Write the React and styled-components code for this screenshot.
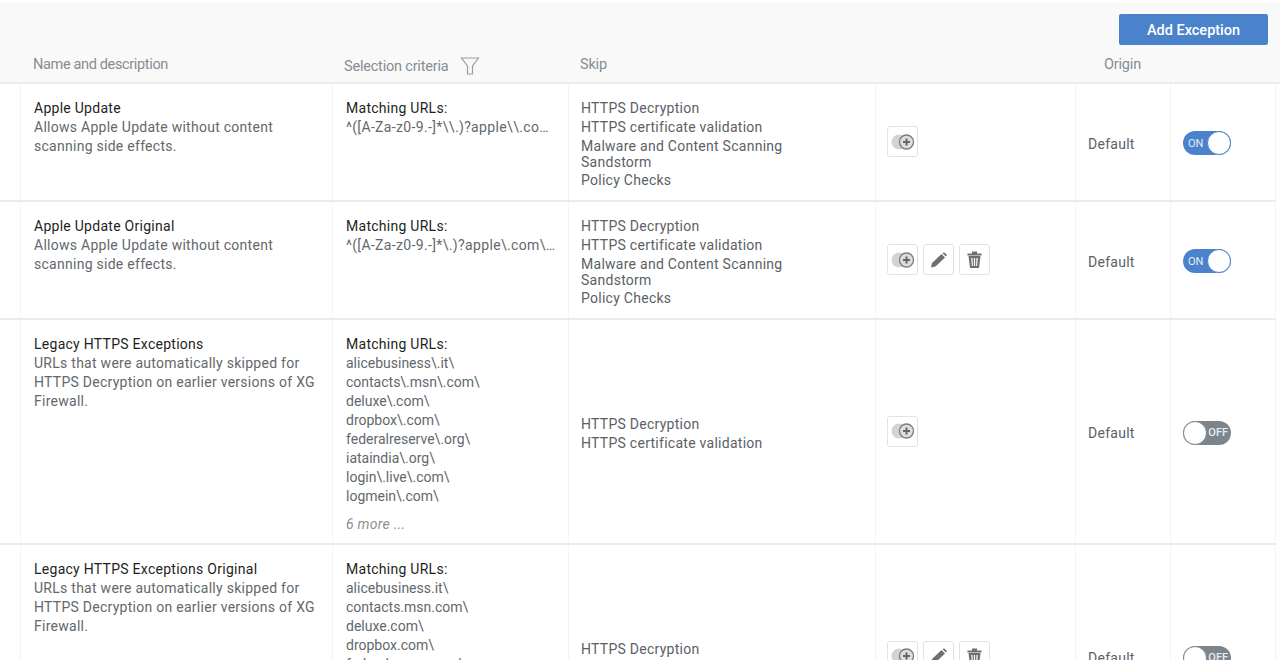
import styled, { createGlobalStyle } from 'styled-components';

const GlobalStyle = createGlobalStyle`
    html, body {
        margin: 0;
        height: 660px;
        overflow: hidden;
        background: #fff;
    }
    body {
        font-family: 'Roboto', 'Liberation Sans', sans-serif;
        font-size: 14px;
        letter-spacing: 0.27px;
        color: #5a6166;
    }
`;

const COLUMNS = '21px 312px 236px 307px 200px 95px 105px';

const Page = styled.div`
    width: 1280px;
    height: 660px;
    overflow: hidden;
    padding-top: 2px;
    box-sizing: border-box;
`;

const Toolbar = styled.div`
    display: flex;
    justify-content: flex-end;
    padding: 12px 12px 0 0;
    height: 35px;
    background: #f9f9f9;
`;

const AddButton = styled.button`
    width: 149px;
    height: 31px;
    padding: 2px 0 0;
    border: 0;
    border-radius: 2px;
    background: #4a83cc;
    color: #fff;
    font: 500 14.5px 'Roboto', sans-serif;
`;

const HeaderRow = styled.div`
    display: grid;
    grid-template-columns: ${COLUMNS};
    height: 33px;
    width: 1276px;
    padding-right: 4px;
    background: #f9f9f9;
    border-bottom: 2px solid #ebebeb;
    color: #848d94;
    font-size: 14.5px;
`;

const HeaderCell = styled.div`
    display: flex;
    align-items: flex-start;
    gap: 12px;
    padding: ${(p) => p.$top || 6}px ${(p) => (p.$center ? 2 : 0)}px 0 ${(p) => p.$left || 0}px;
    justify-content: ${(p) => (p.$center ? 'center' : 'flex-start')};
    line-height: 19px;
    letter-spacing: ${(p) => p.$spacing ?? -0.2}px;
`;

const Row = styled.div`
    display: grid;
    grid-template-columns: ${COLUMNS};
    width: 1276px;
    min-height: 116px;
    border-bottom: 2px solid #ebebeb;
`;

const Cell = styled.div`
    display: flex;
    flex-direction: column;
    justify-content: ${(p) => (p.$middle ? 'center' : 'flex-start')};
    min-width: 0;
    padding: ${(p) => (p.$middle ? `${p.$top || 0}px 0 0 ${p.$left || 0}px` : `15px 12px 9px 13px`)};
    border-right: 1px solid #f4f4f4;
    line-height: 19px;
`;

const Title = styled.div`
    color: #1d1f21;
`;

const Description = styled.div`
    color: #62686d;
`;

const Url = styled.div`
    color: #62686d;
    letter-spacing: 0;
`;

const TruncatedUrl = styled(Url)`
    overflow: hidden;
    white-space: nowrap;
    text-overflow: ellipsis;
    letter-spacing: 0.35px;
`;

const MoreLink = styled.div`
    margin-top: 9px;
    color: #8b8f93;
    font-style: italic;
`;

const TightLines = styled.div`
    line-height: 16px;
    margin: 1.5px 0 0.5px;
`;

const Actions = styled.div`
    display: flex;
    gap: 5px;
`;

const IconButton = styled.button`
    display: flex;
    align-items: center;
    justify-content: center;
    width: 31px;
    height: 31px;
    margin-top: -1px;
    padding: 0;
    background: #fff;
    border: 1px solid #e2e2e2;
    border-radius: 3px;
`;

const Toggle = styled.div`
    position: relative;
    display: flex;
    align-items: center;
    justify-content: ${(p) => (p.$on ? 'flex-start' : 'flex-end')};
    width: 48px;
    height: 24px;
    padding: ${(p) => (p.$on ? '0 0 0 5px' : '0 3px 0 0')};
    box-sizing: border-box;
    border-radius: 12px;
    background: ${(p) => (p.$on ? '#4a83cc' : '#7d858c')};
    color: #e8edf2;
    font-size: 11px;
    font-weight: ${(p) => (p.$on ? 400 : 500)};
    letter-spacing: 0;
`;

const Knob = styled.span`
    position: absolute;
    top: 0;
    ${(p) => (p.$on ? 'right: 0;' : 'left: 0;')}
    width: 24px;
    height: 24px;
    box-sizing: border-box;
    border-radius: 50%;
    background: #fff;
    border: 1px solid ${(p) => (p.$on ? '#4a83cc' : '#7d858c')};
`;

function FilterIcon() {
    return (
        <svg width="20" height="18" viewBox="0 0 20 18" fill="none" stroke="#989fa4" strokeWidth="1.2">
            <path d="M1.500 1h17l-6 8v8h-5V9z" />
        </svg>
    );
}

function ScanIcon() {
    return (
        <svg width="24" height="16" viewBox="0 0 24 16">
            <circle cx="8" cy="8" r="7.500" fill="#d3d3d3" />
            <circle cx="15.500" cy="8" r="7" fill="#dedede" stroke="#7c7c7c" strokeWidth="1.300" />
            <path d="M15.500 4.500v7M12 8h7" stroke="#666" strokeWidth="2" />
        </svg>
    );
}

function PencilIcon() {
    return (
        <svg width="18" height="16" viewBox="0 0 18 16" fill="#6f6f6f">
            <path d="M1 15.500l1-4.500L11.500 2l3.500 3.500L5.500 14.500z" />
            <path d="M12.500 1.200l1.500-1 3 2.800-1 1.500z" />
        </svg>
    );
}

function TrashIcon() {
    return (
        <svg width="15" height="17" viewBox="0 0 15 17">
            <path d="M.5 2.500h14v2H.5zM5 .5h5v2H5z" fill="#6f6f6f" />
            <path
                fillRule="evenodd"
                d="M1.500 5h12l-1.500 12H3zM4.200 7l.7 8h1L5.500 7zM6.900 7v8h1.200V7zM9.500 7l-.4 8h1l.7-8z"
                fill="#6f6f6f"
            />
        </svg>
    );
}

const DECRYPT = ['HTTPS Decryption', 'HTTPS certificate validation'];

const rows = [
    {
        name: 'Apple Update',
        description: 'Allows Apple Update without content scanning side effects.',
        url: '^([A-Za-z0-9.-]*\\\\.)?apple\\\\.com\\\\.*$',
        full: true,
        on: true,
    },
    {
        name: 'Apple Update Original',
        description: 'Allows Apple Update without content scanning side effects.',
        url: '^([A-Za-z0-9.-]*\\.)?apple\\.com\\.*$/update/path',
        full: true,
        on: true,
        editable: true,
    },
    {
        name: 'Legacy HTTPS Exceptions',
        description: 'URLs that were automatically skipped for HTTPS Decryption on earlier versions of XG Firewall.',
        urls: [
            'alicebusiness\\.it\\',
            'contacts\\.msn\\.com\\',
            'deluxe\\.com\\',
            'dropbox\\.com\\',
            'federalreserve\\.org\\',
            'iataindia\\.org\\',
            'login\\.live\\.com\\',
            'logmein\\.com\\',
        ],
        on: false,
    },
    {
        name: 'Legacy HTTPS Exceptions Original',
        description: 'URLs that were automatically skipped for HTTPS Decryption on earlier versions of XG Firewall.',
        urls: [
            'alicebusiness.it\\',
            'contacts.msn.com\\',
            'deluxe.com\\',
            'dropbox.com\\',
            'federalreserve.org\\',
            'iataindia.org\\',
            'login.live.com\\',
            'logmein.com\\',
        ],
        on: false,
        editable: true,
    },
];

function ExceptionRow({ row }) {
    return (
        <Row>
            <Cell $middle />
            <Cell>
                <Title>{row.name}</Title>
                <Description>{row.description}</Description>
            </Cell>
            <Cell>
                <Title>Matching URLs:</Title>
                {row.url ? (
                    <TruncatedUrl>{row.url}</TruncatedUrl>
                ) : (
                    <>
                        {row.urls.map((url) => (
                            <Url key={url}>{url}</Url>
                        ))}
                        <MoreLink>6 more ...</MoreLink>
                    </>
                )}
            </Cell>
            <Cell $middle $left={12} $top={4}>
                {DECRYPT.map((item) => (
                    <div key={item}>{item}</div>
                ))}
                {row.full && (
                    <>
                        <TightLines>
                            Malware and Content Scanning
                            <br />
                            Sandstorm
                        </TightLines>
                        <div>Policy Checks</div>
                    </>
                )}
            </Cell>
            <Cell $middle $left={11}>
                <Actions>
                    <IconButton title="Clone">
                        <ScanIcon />
                    </IconButton>
                    {row.editable && (
                        <>
                            <IconButton title="Edit">
                                <PencilIcon />
                            </IconButton>
                            <IconButton title="Delete">
                                <TrashIcon />
                            </IconButton>
                        </>
                    )}
                </Actions>
            </Cell>
            <Cell $middle $left={12} $top={4}>
                Default
            </Cell>
            <Cell $middle $left={12} $top={2}>
                <Toggle $on={row.on}>
                    {row.on ? 'ON' : 'OFF'}
                    <Knob $on={row.on} />
                </Toggle>
            </Cell>
        </Row>
    );
}

export default function App() {
    return (
        <Page>
            <GlobalStyle />
            <Toolbar>
                <AddButton>Add Exception</AddButton>
            </Toolbar>
            <HeaderRow>
                <div />
                <HeaderCell $left={12} $spacing={-0.35}>
                    Name and description
                </HeaderCell>
                <HeaderCell $left={11} $top={8}>
                    Selection criteria
                    <FilterIcon />
                </HeaderCell>
                <HeaderCell $left={11}>Skip</HeaderCell>
                <div />
                <HeaderCell $center>Origin</HeaderCell>
                <div />
            </HeaderRow>
            {rows.map((row) => (
                <ExceptionRow key={row.name} row={row} />
            ))}
        </Page>
    );
}
